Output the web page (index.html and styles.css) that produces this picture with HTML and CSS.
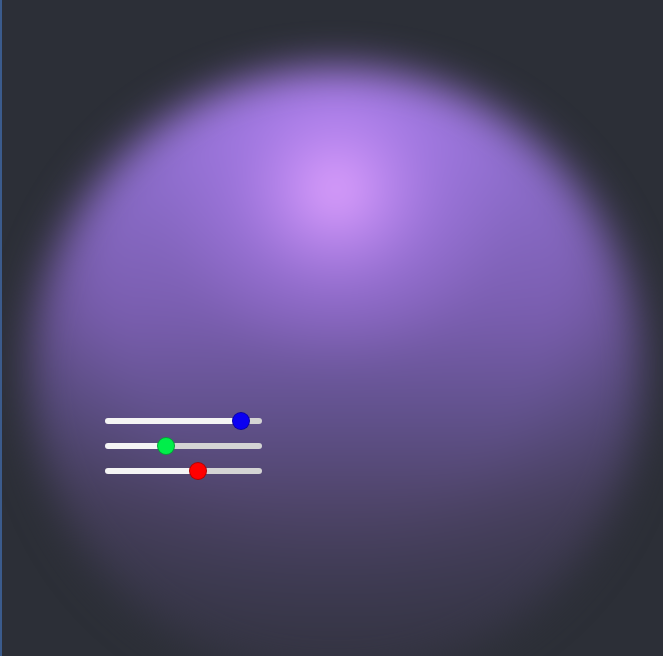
FILE: index.html
```html
<!DOCTYPE html>
<html lang="en">

  <head>
    <meta charset="UTF-8">
    <meta name="viewport" content="width=device-width, initial-scale=1.0">
    <title>Color Glow</title>

    <link rel="stylesheet" href="styles.css">

  </head>

  <body>

    <div id="stage">
      <div class="glow"></div>

      <div class="sliders">
        <input type="range" class="slider slider--blue" id="blue" min="0" max="255" value="233">
        <input type="range" class="slider slider--green" id="green" min="0" max="255" value="95">
        <input type="range" class="slider slider--red" id="red" min="0" max="255" value="154">
      </div>
    </div>

    <script>
      const sliders = document.querySelectorAll(".slider");

      function paintFill(slider) {
        let pct = (slider.value - slider.min) / (slider.max - slider.min);
        // thumb is 18px wide, so the fill ends at its centre
        let px = 9 + pct * (slider.offsetWidth - 18);
        slider.style.setProperty("--fill", px + "px");
      }

      sliders.forEach(slider => {
        paintFill(slider);
        slider.addEventListener("input", () => paintFill(slider));
      });
    </script>
  </body>

</html>
```

FILE: styles.css
```css
* {
  margin: 0;
  padding: 0;
  box-sizing: border-box;
}

body {
  background-color: #2c2f37;
  height: 100vh;
  overflow: hidden;
  border-left: 2px solid #3b5b8c;
}

#stage {
  position: relative;
  height: 100%;
}

/* light spot on top, dark falloff towards the bottom and the sides */
.glow {
  position: absolute;
  left: 28px;
  top: 68px;
  width: 612px;
  height: 612px;
  border-radius: 50%;
  background:
    radial-gradient(circle at 50% 20%, rgba(228, 166, 255, 1) 0, rgba(208, 148, 255, 0.7) 45px, rgba(186, 132, 250, 0.35) 100px, rgba(180, 130, 250, 0) 180px),
    radial-gradient(circle at 50% 35%, rgba(44, 47, 55, 0) 45%, rgba(44, 47, 55, 0.45) 75%),
    linear-gradient(to bottom, #9a76dc 0%, #8a6bc8 20%, #7a5eb0 40%, #62528e 56%, #4e4468 72%, #433e5a 84%, #3c394d 96%);
  filter: blur(20px);
}

.sliders {
  position: relative;
  display: flex;
  flex-direction: column;
  gap: 19px;
  padding: 418px 0 0 103px;
}

.slider {
  -webkit-appearance: none;
  appearance: none;
  width: 157px;
  height: 6px;
  border-radius: 3px;
  outline: none;
  background: linear-gradient(to right, #f4f4f4 var(--fill, 50%), #d4d4d4 var(--fill, 50%));
}

.slider::-webkit-slider-thumb {
  -webkit-appearance: none;
  appearance: none;
  width: 18px;
  height: 18px;
  border-radius: 50%;
  border: 1px solid rgba(0, 0, 0, 0.3);
  cursor: pointer;
}

.slider--blue::-webkit-slider-thumb {
  background-color: #0b00f2;
}

.slider--green::-webkit-slider-thumb {
  background-color: #00ee4a;
}

.slider--red::-webkit-slider-thumb {
  background-color: #ff0000;
}
```
